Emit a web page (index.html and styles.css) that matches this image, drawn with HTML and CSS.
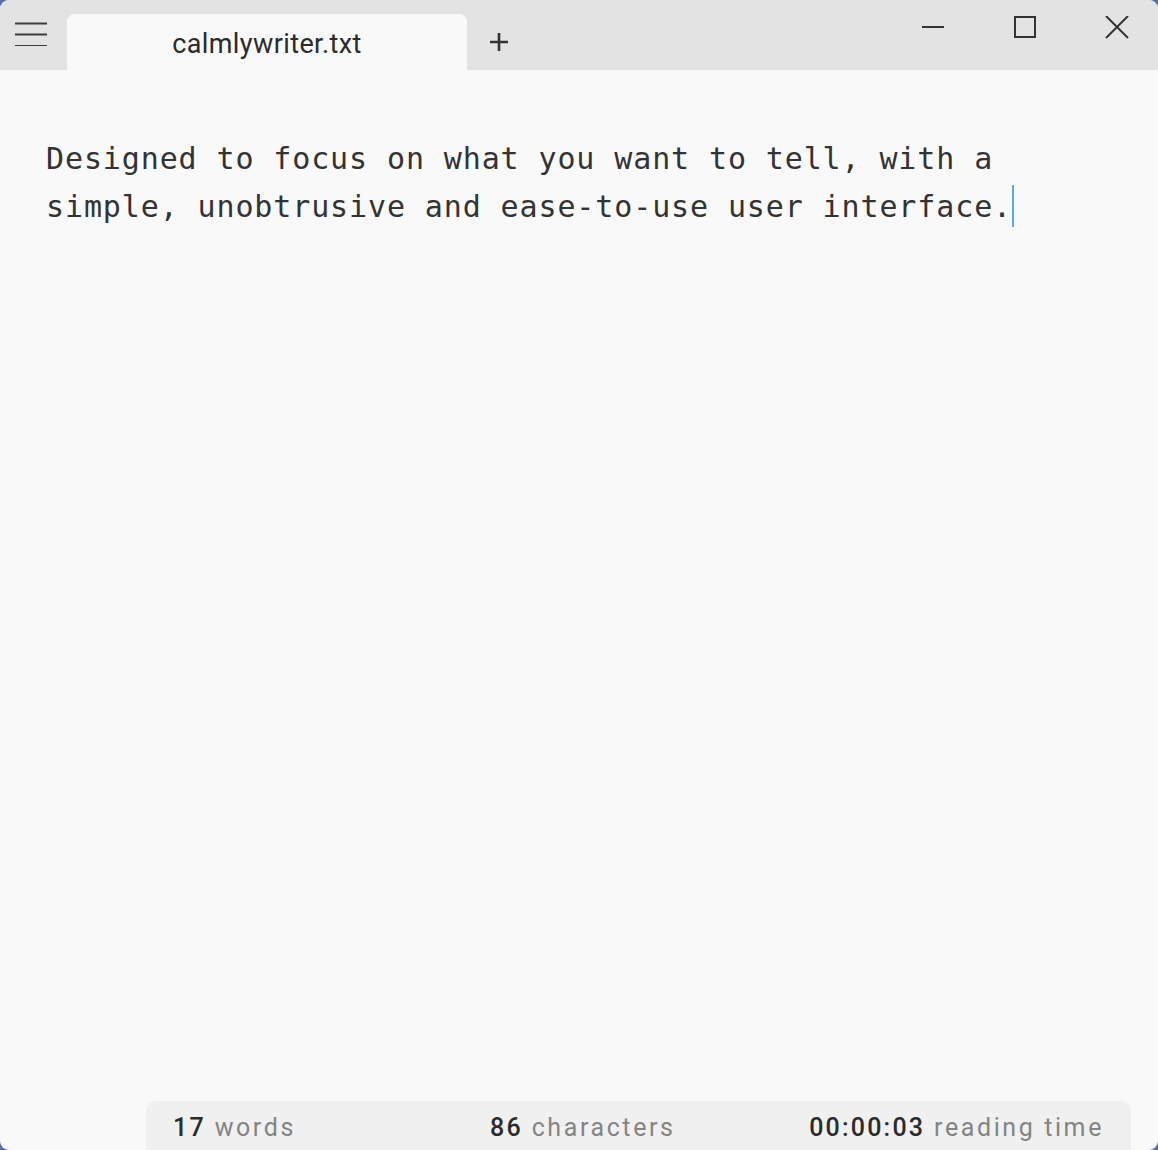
FILE: index.html
```html
<!DOCTYPE html>
<html>
<head>
  <meta name="viewport" content="width=device-width, initial-scale=1">
  <link rel="stylesheet" href="styles.css">
</head>
<body>
  <div class="window">
    <div class="titlebar">
      <button class="menu-btn" aria-label="Menu">
        <svg width="34" height="28" viewBox="0 0 34 28">
          <path d="M0 6.5h32M0 18.5h32M0 31h32" stroke="#3c3c3c" stroke-width="2" transform="translate(1,-0.5) scale(1,0.92)"/>
        </svg>
      </button>
      <div class="tab">calmlywriter.txt</div>
      <button class="new-tab" aria-label="New tab">
        <svg width="20" height="20" viewBox="0 0 20 20">
          <path d="M10 1v18M1 10h18" stroke="#333" stroke-width="2.6"/>
        </svg>
      </button>
      <div class="spacer"></div>
      <div class="win-controls">
        <button class="win-btn" aria-label="Minimize">
          <svg width="24" height="24" viewBox="0 0 24 24"><path d="M1 11h22" stroke="#333" stroke-width="2"/></svg>
        </button>
        <button class="win-btn" aria-label="Maximize">
          <svg width="24" height="24" viewBox="0 0 24 24"><rect x="2" y="1" width="20" height="20" fill="none" stroke="#333" stroke-width="2"/></svg>
        </button>
        <button class="win-btn" aria-label="Close">
          <svg width="24" height="24" viewBox="0 0 24 24"><path d="M1 0l22 22M23 0L1 22" stroke="#333" stroke-width="2"/></svg>
        </button>
      </div>
    </div>

    <div class="editor">
      <p class="doc">Designed to focus on what you want to tell, with a simple, unobtrusive and ease-to-use user interface.<span class="caret"></span></p>
    </div>

    <div class="statusbar">
      <span class="stat"><b>17</b> words</span>
      <span class="stat"><b>86</b> characters</span>
      <span class="stat"><b>00:00:03</b> reading time</span>
    </div>
  </div>
</body>
</html>
```

FILE: styles.css
```css
html, body { height: 100%; }
body {
  margin: 0;
  background: #5a6cb2;
  font-family: Roboto, "Noto Sans", sans-serif;
  overflow: hidden;
}

button {
  background: none;
  border: 0;
  padding: 0;
  cursor: pointer;
  display: flex;
  align-items: center;
  justify-content: center;
}

.window {
  height: 100%;
  display: flex;
  flex-direction: column;
  background: #f9f9f9;
  border-radius: 9px;
  overflow: hidden;
}

/* top strip: menu, tabs, window buttons */
.titlebar {
  height: 70px;
  flex: none;
  display: flex;
  align-items: flex-end;
  background: #e3e3e3;
}
.menu-btn {
  width: 67px;
  height: 70px;
  justify-content: flex-start;
  padding-left: 14px;
  padding-bottom: 6px;
  box-sizing: border-box;
}
.tab {
  width: 400px;
  height: 56px;
  background: #f9f9f9;
  border-radius: 8px 8px 0 0;
  display: flex;
  align-items: center;
  justify-content: center;
  font-size: 27px;
  letter-spacing: 0.4px;
  color: #2b2b2b;
  padding-top: 4px;
  box-sizing: border-box;
}
.new-tab {
  width: 64px;
  height: 70px;
  padding-top: 14px;
  box-sizing: border-box;
}
.spacer { flex: 1; }
.win-controls {
  display: flex;
  align-self: flex-start;
  margin-right: -5px;
}
.win-btn {
  width: 92px;
  height: 56px;
}

/* writing area */
.editor {
  flex: 1;
  padding: 65px 46px 0;
}
.doc {
  margin: 0;
  max-width: 990px;
  font-family: "DejaVu Sans Mono", "Liberation Mono", monospace;
  font-size: 30px;
  letter-spacing: 0.88px;
  line-height: 48px;
  color: #333;
}
.caret {
  display: inline-block;
  width: 2px;
  height: 42px;
  vertical-align: -10px;
  background: #5aa9ec;
}

/* counters along the bottom */
.statusbar {
  flex: none;
  margin: 0 27px 0 146px;
  height: 49px;
  background: #f0f0f0;
  border-radius: 9px 9px 0 0;
  display: grid;
  grid-template-columns: 317px 1fr auto;
  align-items: center;
  padding: 3px 27px 0;
  box-sizing: border-box;
  font-size: 25px;
  letter-spacing: 2.6px;
  color: #848484;
}
.stat b {
  font-weight: 500;
  color: #2b2b2b;
  letter-spacing: 2.2px;
}
```
